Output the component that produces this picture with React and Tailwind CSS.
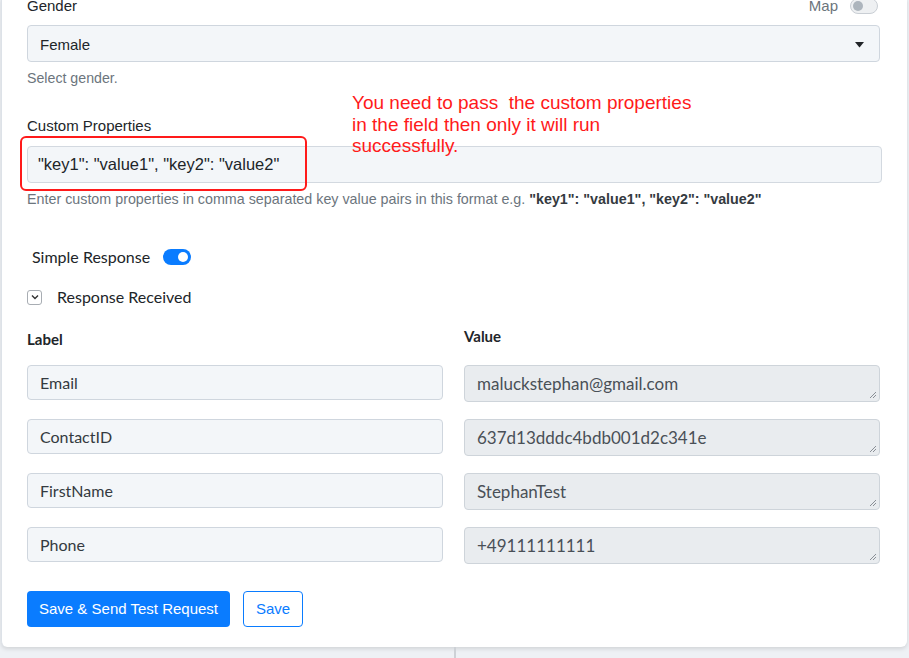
import React from "react";

const sans = { fontFamily: '"Liberation Sans", Arial, sans-serif' };
const lato = { fontFamily: 'Lato, "Open Sans", sans-serif' };

function Resize() {
  return (
    <svg className="absolute right-[2px] bottom-[2px]" width="8" height="8" viewBox="0 0 8 8">
      <path d="M7 1 L1 7 M7 4 L4 7" stroke="#8a8f96" strokeWidth="1" />
    </svg>
  );
}

const rows = [
  ["Email", "maluckstephan@gmail.com"],
  ["ContactID", "637d13dddc4bdb001d2c341e"],
  ["FirstName", "StephanTest"],
  ["Phone", "+49111111111"],
];

export default function App() {
  return (
    <div className="relative h-[658px] w-[909px] overflow-hidden bg-[#eef1f5]">
      <div className="ml-[1px] w-[906px] rounded-b-[6px] bg-white pl-[25px] pr-[27px] pb-[20px] shadow-[0_2px_4px_rgba(0,0,0,0.12)] border-l border-[#dde2e8]">
        <div className="-mt-[2px] flex h-[16px] items-center justify-between text-[15px] leading-[16px] text-[#212529]" style={sans}>
          <span>Gender</span>
          <div className="flex items-center gap-[12px] text-[#6c757d]">
            <span>Map</span>
            <span className="relative mr-[2px] h-[16px] w-[28px] rounded-full border border-[#c9ced4] bg-[#eef0f2]">
              <span className="absolute left-[2px] top-[2px] h-[10px] w-[10px] rounded-full bg-[#adb5bd]" />
            </span>
          </div>
        </div>
        <div className="mt-[11px] flex h-[37px] items-center justify-between rounded-[4px] border border-[#cfd6de] bg-[#f3f6f9] pl-[12px] pr-[15px] pt-[3px] text-[15px] text-[#212529]" style={sans}>
          <span>Female</span>
          <svg width="9" height="6" viewBox="0 0 9 6"><path d="M0 0 H9 L4.5 5.5 Z" fill="#212529" /></svg>
        </div>
        <div className="mt-[8px] text-[14.2px] leading-[16px] text-[#6c757d]" style={sans}>Select gender.</div>
        <div className="mt-[31px] text-[15px] leading-[18px] text-[#212529]" style={sans}>Custom Properties</div>
        <div className="mt-[11px] mr-[-2px] flex h-[37px] items-center rounded-[4px] border border-[#d3d9e0] bg-[#f3f6f9] pl-[10px] text-[16.5px] text-[#212529]" style={sans}>
          "key1": "value1", "key2": "value2"
        </div>
        <div className="mt-[8px] whitespace-nowrap text-[14.3px] leading-[16px] text-[#6c757d]" style={sans}>
          Enter custom properties in comma separated key value pairs in this format e.g.{" "}
          <b className="text-[#343a40]">"key1": "value1", "key2": "value2"</b>
        </div>
        <div className="mt-[40px] flex h-[20px] items-center gap-[13px] pl-[5px] text-[16px] text-[#212529]" style={lato}>
          <span>Simple Response</span>
          <span className="relative h-[16px] w-[28px] rounded-full bg-[#0a7cff]">
            <span className="absolute right-[3px] top-[3px] h-[10px] w-[10px] rounded-full bg-white" />
          </span>
        </div>
        <div className="mt-[20px] flex h-[20px] items-center gap-[15px] text-[16px] text-[#212529]" style={lato}>
          <span className="flex h-[15px] w-[15px] items-center justify-center rounded-[3px] border border-[#a8adb3] bg-white">
            <svg width="8" height="6" viewBox="0 0 8 6"><path d="M1 1.5 L4 4.5 L7 1.5" fill="none" stroke="#333" strokeWidth="1.4" /></svg>
          </span>
          <span>Response Received</span>
        </div>
        <div className="mt-[20px] grid grid-cols-2 gap-x-[21px] text-[15px] font-bold leading-[18px] text-[#212529]" style={lato}>
          <span className="mt-[3px]">Label</span>
          <span>Value</span>
        </div>
        <div className="mt-[17px] grid grid-cols-2 gap-x-[21px] gap-y-[17px]" style={lato}>
          {rows.map(([l, v]) => (
            <React.Fragment key={l}>
              <div className="flex h-[35px] items-center rounded-[4px] border border-[#cfd6de] bg-[#f3f6f9] pl-[12px] text-[16px] text-[#343a40]">{l}</div>
              <div className="relative h-[37px] rounded-[4px] border border-[#ced4da] bg-[#e9ecef] pl-[12px] pt-[8px] text-[17px] leading-[20px] text-[#495057]">
                {v}
                <Resize />
              </div>
            </React.Fragment>
          ))}
        </div>
        <div className="mt-[27px] flex gap-[13px] text-[15px]" style={sans}>
          <button className="h-[36px] rounded-[4px] bg-[#0a7cff] px-[12px] text-white">Save &amp; Send Test Request</button>
          <button className="h-[36px] rounded-[4px] border border-[#0a7cff] bg-white px-[12px] text-[#0a7cff]">Save</button>
        </div>
      </div>
      <div className="flex h-[12px]">
        <div className="w-[454px]" />
        <div className="w-[2px] bg-[#cdd1d6]" />
      </div>

      <div className="absolute left-[352px] top-[92px] text-[19px] leading-[21.5px] text-[#ff1a1a]" style={sans}>
        <div>You need to pass&nbsp; the custom properties</div>
        <div>in the field then only it will run</div>
        <div>successfully.</div>
      </div>
      <div className="absolute left-[20px] top-[136px] h-[55px] w-[287px] rounded-[6px] border-2 border-[#ff1a1a]" />
    </div>
  );
}
